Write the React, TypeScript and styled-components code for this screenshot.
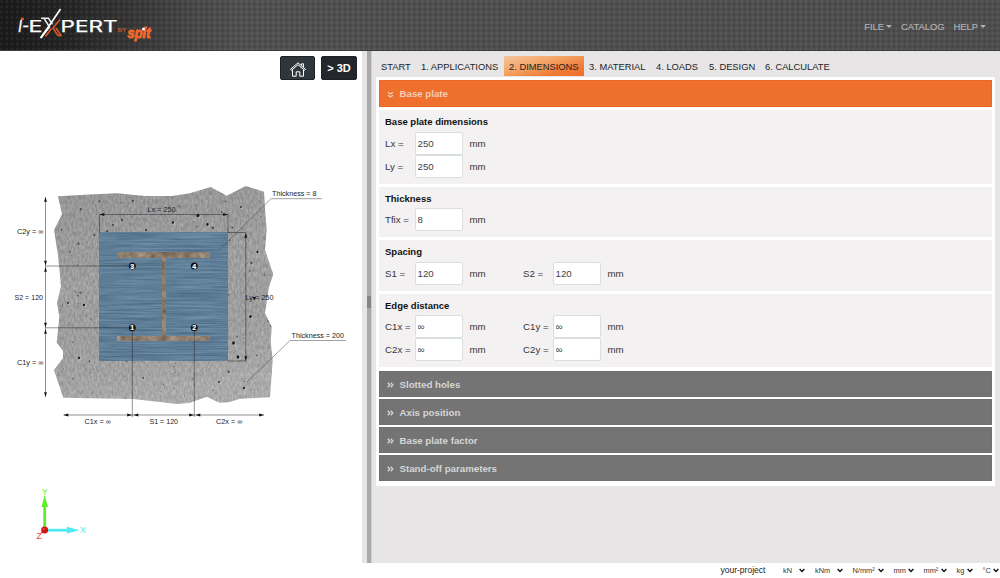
import React from "react";
import styled, { createGlobalStyle, css } from "styled-components";

const Global = createGlobalStyle`
  *, *::before, *::after { box-sizing: border-box; }
  body { margin: 0; background: #fff; overflow: hidden; }
  body, input, button { font-family: "Liberation Sans", Arial, sans-serif; }
`;

const Page = styled.div`
  display: flex;
  flex-direction: column;
  width: 1000px;
  height: 578px;
  color: #33363a;
  font-size: 9.7px;
`;

const Header = styled.header`
  display: flex;
  justify-content: space-between;
  flex: 0 0 51px;
  border-bottom: 1px solid #3c3a3b;
  background:
    radial-gradient(circle at 1.5px 1.5px, rgba(255, 255, 255, 0.08) 0.6px, transparent 1.6px) 0 0 / 5.33px 5.33px,
    radial-gradient(circle at 1.5px 1.5px, rgba(0, 0, 0, 0.14) 0.6px, transparent 1.8px) 2.6px 2.6px / 5.33px 5.33px,
    linear-gradient(90deg, #1a1a1a 0, #252525 70px, #393939 140px, #494949 200px, #505050 240px, #4e4e4e 100%);
`;

const Menu = styled.nav`
  display: flex;
  gap: 9px;
  padding: 20px 14px 0 0;
`;

const MenuItem = styled.a`
  display: flex;
  align-items: center;
  gap: 2px;
  height: 12px;
  color: #b0b0b0;
  font-size: 9.4px;
  -webkit-text-stroke: 0.2px #b0b0b0;
`;

const Caret = styled.span`
  border: 3px solid transparent;
  border-top-color: #b4b4b4;
  border-bottom: 0;
`;

const Main = styled.main`
  display: flex;
  flex: 0 0 512px;
`;

const Viewer = styled.section`
  display: flex;
  flex-direction: column;
  flex: 0 0 362px;
  background: #fff;
`;

const ViewerTools = styled.div`
  display: flex;
  justify-content: flex-end;
  gap: 6px;
  height: 30px;
  padding: 5px 5px 0 0;
`;

const ToolButton = styled.button<{ $tint?: boolean }>`
  display: flex;
  align-items: center;
  justify-content: center;
  width: ${(p) => (p.$tint ? 35 : 36)}px;
  height: 24px;
  padding: 0;
  border: 1px solid #1c2227;
  border-radius: 2px;
  background: ${(p) => (p.$tint ? "#30373c" : "#23272b")};
  color: #fff;
  font-size: 11px;
  font-weight: bold;

  svg { margin-top: 2px; }
`;

const Splitter = styled.div`
  display: flex;
  align-items: center;
  flex: 0 0 10px;
  border-left: 5px solid #e6e4e5;
  border-right: 1px solid #d0cecf;
  background: #aaa9aa;
`;

const Grip = styled.span`
  width: 4px;
  height: 12px;
  margin-top: -11px;
  background: #858585;
`;

const Side = styled.section`
  flex: 1;
  padding: 5px 5px 0 4px;
  background: #e7e5e6;
`;

const Tabs = styled.nav`
  display: flex;
  height: 21px;
`;

const Tab = styled.a<{ $active?: boolean; $w: number }>`
  flex: 0 0 ${(p) => p.$w}px;
  height: 20px;
  padding-left: 5px;
  line-height: 22px;
  font-size: 9.35px;
  white-space: nowrap;
  color: #222427;
  ${(p) =>
    p.$active &&
    css`
      background: linear-gradient(165deg, #f5c59d 0%, #f3a566 40%, #f07a34 75%, #ee6f2d 100%);
    `}
`;

const Panel = styled.div`
  display: flex;
  flex-direction: column;
  height: 409px;
  padding: 3px;
  background: #fff;
`;

const Bar = styled.div<{ $open?: boolean }>`
  display: flex;
  align-items: center;
  height: ${(p) => (p.$open ? 27 : 26)}px;
  padding-left: 6.5px;
  margin-bottom: ${(p) => (p.$open ? 3 : 2)}px;
  border: 1px solid ${(p) => (p.$open ? "#ea6823" : "#707070")};
  background: ${(p) => (p.$open ? "#ef702d" : "#747474")};
  color: ${(p) => (p.$open ? "#f3cdb8" : "#d6d6d6")};
  font-weight: bold;

  svg { margin: 2px 6px 0 0; }
`;

const Group = styled.div<{ $h: number; $last?: boolean }>`
  height: ${(p) => p.$h}px;
  margin-bottom: ${(p) => (p.$last ? 4 : 3)}px;
  padding: 6px 6px 0;
  background: #f3f1f2;
`;

const GroupTitle = styled.h3`
  height: 12px;
  margin: 0 0 4px;
  line-height: 12px;
  font-size: 9.5px;
  color: #111;
`;

const FieldRow = styled.div`
  display: flex;
  height: 22.7px;
`;

const Field = styled.label`
  display: flex;
  align-items: center;
  width: 138px;
`;

const FieldName = styled.span`
  width: 29.5px;
  white-space: nowrap;
`;

const FieldInput = styled.input`
  width: 48px;
  height: 23px;
  padding: 0 2px;
  margin-right: 7px;
  border: 1px solid #d9dee1;
  border-radius: 2px;
  background: #fff;
  color: #3d4247;
  font-size: 9.7px;
`;

const Footer = styled.footer`
  display: flex;
  flex: 0 0 15px;
  gap: 10px;
  padding: 0 2px 0 720.5px;
  background: #fff;
  line-height: 15px;
`;

const Project = styled.span`
  flex: 0 0 52.5px;
  font-size: 8.5px;
  color: #222;
`;

const Unit = styled.span<{ $w: number }>`
  display: flex;
  align-items: center;
  justify-content: space-between;
  flex: 0 0 ${(p) => p.$w}px;
  font-size: 7.4px;
  color: #333;
`;

const Logo = () => (
  <svg width="160" height="50" viewBox="0 0 160 50" fontFamily="'Liberation Sans', Arial, sans-serif">
    <g fill="#fff" fontFamily="Inter, sans-serif" fontSize="16" fontWeight="400" stroke="#fff" strokeWidth=".25">
      <text x="18" y="32" textLength="11" lengthAdjust="spacingAndGlyphs" fontStyle="italic">I-</text>
      <text x="28.500" y="32" textLength="14" lengthAdjust="spacingAndGlyphs">E</text>
      <text x="60.500" y="32" textLength="57" lengthAdjust="spacingAndGlyphs">PERT</text>
    </g>
    <rect x="20.800" y="17.800" width="3" height="2.200" fill="#ee6026" />
    <g fill="none" strokeWidth="1.500">
      <path d="M60 19.500 53 28l5 7.500h3l-5-7.500M51.500 28.500l-6 8" stroke="#e25a26" />
      <path d="M41 18.300h7.500l4 6M41 18.300h3l5.500 8.700-8.500 11" stroke="#eee" />
      <path d="M60.500 9 49 26 40.500 38" stroke="#fff" strokeWidth="1.700" />
    </g>
    <text x="117.500" y="32.200" fontSize="5.600" textLength="9" lengthAdjust="spacingAndGlyphs" fill="#c4552c" stroke="#c4552c" strokeWidth=".2">BY</text>
    <text x="127.500" y="38" fontSize="15.500" fontWeight="bold" fontStyle="italic" textLength="23" lengthAdjust="spacingAndGlyphs" fill="#f36a2b" stroke="#f36a2b" strokeWidth=".9">spit</text>
    <circle cx="143.500" cy="29" r="1.500" fill="#fff" />
  </svg>
);

const HomeIcon = () => (
  <svg width="18" height="16" viewBox="0 0 18 16" fill="none" stroke="#fff" strokeWidth="1">
    <path d="M1.500 8.300 9 1.800l7.500 6.500-.9 1L9 3.700l-6.600 5.600zM3.500 9v6.200h3.700v-4.400h3.600v4.400h3.700V9M12.500 4.500V2.800h2v3.500" />
  </svg>
);

const BarIcon = ({ open }: { open?: boolean }) => (
  <svg width="7" height="8" viewBox="0 0 7 8" fill="none" stroke="currentColor" strokeWidth="1.3">
    {open ? <path d="m1 1.200 2.500 1.800L6 1.200M1 4.200l2.500 1.800 2.500-1.800" /> : <path d="m.8 1.800 2 2.200-2 2.200M3.800 1.800l2 2.200-2 2.200" />}
  </svg>
);

const Chevron = () => (
  <svg width="6" height="5" viewBox="0 0 6 5" fill="none" stroke="#111" strokeWidth="1.4">
    <path d="M.6 1 3 3.500 5.400 1" />
  </svg>
);

const concrete =
  "58,196.300 90,194.500 117,193.300 145,196 172,196 190,193.300 210.700,187 226.700,195.700 245.700,186 264,191.700 265.300,213 266.700,230 265,250 273.300,274.300 269,287 265,313 271.700,327 270.700,342 272.700,360 270,397.300 240,398.700 230,402 219.300,402.700 206.700,396.700 190,402.700 177,404 160,402 133,399 63.300,397.700 54,370 63,358 63,350.700 56.700,342.700 59.300,317 57,303 61,286 58,255 54,230 62,214.300";

/* Deterministic scatter of the air pockets in the concrete. */
const pits = Array.from({ length: 190 }, (_, i) => {
  const a = Math.abs(Math.sin(i * 12.9898 + 4.1) * 43758.5453) % 1;
  const b = Math.abs(Math.sin(i * 78.233 + 1.7) * 24634.6345) % 1;
  const c = Math.abs(Math.sin(i * 39.425 + 2.3) * 9182.731) % 1;
  return { x: 54 + a * 218, y: 190 + b * 212, r: 0.4 + c * c * c * 0.7 };
});

const bigPits = [
  [198, 215.5, 1.8], [173, 222.5, 1.3], [207.5, 224.5, 1.4], [133, 201, 1], [241, 207, 1], [250.5, 316.5, 1.6],
  [233.5, 343, 1.7], [238, 357, 1.7], [257.5, 252, 1.2], [84, 305, 1.3], [68, 303, 1], [79, 358, 1.2], [219, 382, 1], [244, 388, 1.2],
];

type Arrow = [number, number, "u" | "d" | "l" | "r"];
const turn = { u: 0, r: 90, d: 180, l: 270 };
const arrows: Arrow[] = [
  [45.5, 197, "u"], [45.5, 265.5, "d"], [45.5, 267, "u"], [45.5, 327.5, "d"], [45.5, 329, "u"], [45.5, 397, "d"],
  [63.5, 415, "l"], [132, 415, "r"], [133.5, 415, "l"], [194, 415, "r"], [195.5, 415, "l"], [264, 415, "r"],
  [99.5, 214.5, "l"], [228, 214.5, "r"], [245.8, 233, "u"], [245.8, 361, "d"],
];

const labels: [string, number, number, number][] = [
  ["Lx = 250", 147.5, 212, 28], ["Thickness = 8", 272, 196, 44.5], ["Ly = 250", 245.5, 300, 28], ["Thickness = 200", 291.5, 338, 52.5],
  ["C2y = ∞", 17, 233.5, 26.5], ["S2 = 120", 14.5, 300, 28.5], ["C1y = ∞", 17, 365, 26.5],
  ["C1x = ∞", 84.5, 423.5, 26.5], ["S1 = 120", 149.5, 423.5, 28.5], ["C2x = ∞", 216, 423.5, 26.5],
];

const anchors: [string, number, number][] = [["3", 132.3, 266], ["4", 194.3, 266], ["1", 132.3, 327.8], ["2", 194.3, 327.8]];

const Drawing = () => (
  <svg width="362" height="482" viewBox="0 81 362 482" fontFamily="'Liberation Sans', Arial, sans-serif">
    <defs>
      <clipPath id="slab"><polygon points={concrete} /></clipPath>
      <linearGradient id="shade" x1="0" y1="0" x2="0.2" y2="1">
        <stop offset="0" stopColor="#000" stopOpacity=".08" />
        <stop offset=".5" stopColor="#000" stopOpacity=".01" />
        <stop offset="1" stopColor="#fff" stopOpacity=".1" />
      </linearGradient>
      <filter id="grain" x="0" y="0" width="100%" height="100%" colorInterpolationFilters="sRGB">
        <feTurbulence type="fractalNoise" baseFrequency=".5 .22" numOctaves="4" seed="7" />
        <feColorMatrix values=".24 0 0 0 .51  .24 0 0 0 .51  .24 0 0 0 .51  0 0 0 0 1" />
      </filter>
      <filter id="brushed" x="0" y="0" width="100%" height="100%" colorInterpolationFilters="sRGB">
        <feTurbulence type="fractalNoise" baseFrequency=".018 .6" numOctaves="4" seed="3" />
        <feColorMatrix values=".22 0 0 0 .26  .22 0 0 0 .38  .22 0 0 0 .48  0 0 0 0 1" />
      </filter>
      <filter id="rust" x="0" y="0" width="100%" height="100%" colorInterpolationFilters="sRGB">
        <feTurbulence type="fractalNoise" baseFrequency=".12" numOctaves="3" seed="5" />
        <feColorMatrix values=".4 0 0 0 .36  .4 0 0 0 .29  .4 0 0 0 .22  0 0 0 0 1" />
      </filter>
    </defs>

    <g clipPath="url(#slab)">
      <rect x="50" y="180" width="230" height="230" filter="url(#grain)" />
      <rect x="50" y="180" width="230" height="230" fill="url(#shade)" />
      {pits.map((p, i) => (
        <ellipse key={i} cx={p.x} cy={p.y} rx={p.r} ry={p.r * 1.2} fill="#2b2b2b" opacity=".75" />
      ))}
      {bigPits.map(([x, y, r], i) => (
        <g key={i}>
          <ellipse cx={x + 1} cy={y + 1} rx={r} ry={r} fill="#ccc" opacity=".6" />
          <ellipse cx={x} cy={y} rx={r * 0.8} ry={r} fill="#161616" />
        </g>
      ))}
    </g>
    <rect x="99.500" y="232.500" width="128.500" height="128.500" filter="url(#brushed)" />
    <g>
      <rect x="117.500" y="252.700" width="92.500" height="5" filter="url(#rust)" />
      <rect x="162" y="257.500" width="3.500" height="79" filter="url(#rust)" />
      <rect x="117.500" y="336" width="92.500" height="5" filter="url(#rust)" />
    </g>

    <g stroke="#222" strokeWidth=".5" fill="none">
      <path d="M45.500 197V397M45.500 266H132M45.500 327.800H132M63.500 415H264M132.300 328V417M194.300 328V417" />
      <path d="M99.500 233V214.500H228V232.500H245.800V361H228" />
    </g>
    <g stroke="#444" strokeWidth=".5" fill="none">
      <path d="m219 250 52-51.300h51M247 382l43-41.500h56" />
    </g>
    {arrows.map(([x, y, d], i) => (
      <path key={i} d="M0 0 1.400 4.800h-2.800z" transform={`translate(${x} ${y}) rotate(${turn[d]})`} fill="#111" />
    ))}
    <path d="m252.500 297 3.500 0-1.600 3.500z" fill="#111" />
    {anchors.map(([n, x, y]) => (
      <g key={n}>
        <circle cx={x} cy={y} r="3.500" fill="#111" />
        <text x={x} y={y + 2.5} fontSize="7" fontWeight="bold" fill="#fff" stroke="#fff" strokeWidth=".2" textAnchor="middle">{n}</text>
      </g>
    ))}
    <g fontSize="7.200" fill="#222">
      {labels.map(([t, x, y, w]) => (
        <text key={t} x={x} y={y} textLength={w} lengthAdjust="spacingAndGlyphs">{t}</text>
      ))}
    </g>

    <rect x="43.300" y="505" width="2.800" height="25" fill="#5df02a" />
    <path d="m44.700 495 3.300 12h-6.600z" fill="#5df02a" />
    <rect x="45" y="528.800" width="24" height="2.800" fill="#4ee9f2" />
    <path d="m79.500 530.200-12.500-3.400v6.800z" fill="#4ee9f2" />
    <path d="m40 534 4-4" stroke="#f04238" strokeWidth=".8" />
    <circle cx="44.600" cy="530" r="3.500" fill="#d4140f" />
    <circle cx="43.700" cy="529" r="1.100" fill="#f04a3c" />
    <g fontSize="8.800">
      <text x="41.700" y="495" fill="#5df02a">Y</text>
      <text x="80" y="533.300" fill="#4ee9f2">X</text>
      <text x="36.500" y="538.500" fill="#f04238">Z</text>
    </g>
  </svg>
);

const Value = ({ name, value }: { name: string; value: string }) => (
  <Field>
    <FieldName>{name} =</FieldName>
    <FieldInput defaultValue={value} />
    <span>mm</span>
  </Field>
);

const groups: { title: string; h: number; rows: [string, string][][] }[] = [
  { title: "Base plate dimensions", h: 73.5, rows: [[["Lx", "250"]], [["Ly", "250"]]] },
  { title: "Thickness", h: 50.5, rows: [[["Tfix", "8"]]] },
  { title: "Spacing", h: 50.5, rows: [[["S1", "120"], ["S2", "120"]]] },
  { title: "Edge distance", h: 73.5, rows: [[["C1x", "∞"], ["C1y", "∞"]], [["C2x", "∞"], ["C2y", "∞"]]] },
];

const tabs: [string, number][] = [
  ["START", 40], ["1. APPLICATIONS", 88], ["2. DIMENSIONS", 80], ["3. MATERIAL", 67],
  ["4. LOADS", 53], ["5. DESIGN", 56], ["6. CALCULATE", 75],
];

const units: [string, number][] = [["kN", 22], ["kNm", 27.5], ["N/mm²", 31], ["mm", 20], ["mm²", 23], ["kg", 16], ["°C", 16]];

export default function App() {
  return (
    <Page>
      <Global />
      <Header>
        <Logo />
        <Menu>
          <MenuItem>FILE<Caret /></MenuItem>
          <MenuItem>CATALOG</MenuItem>
          <MenuItem>HELP<Caret /></MenuItem>
        </Menu>
      </Header>
      <Main>
        <Viewer>
          <ViewerTools>
            <ToolButton $tint aria-label="Home"><HomeIcon /></ToolButton>
            <ToolButton>&gt; 3D</ToolButton>
          </ViewerTools>
          <Drawing />
        </Viewer>
        <Splitter><Grip /></Splitter>
        <Side>
          <Tabs>
            {tabs.map(([t, w]) => (
              <Tab key={t} $w={w} $active={t.startsWith("2")}>{t}</Tab>
            ))}
          </Tabs>
          <Panel>
            <Bar $open><BarIcon open />Base plate</Bar>
            {groups.map((g, i) => (
              <Group key={g.title} $h={g.h} $last={i === groups.length - 1}>
                <GroupTitle>{g.title}</GroupTitle>
                {g.rows.map((r) => (
                  <FieldRow key={r[0][0]}>
                    {r.map(([n, v]) => <Value key={n} name={n} value={v} />)}
                  </FieldRow>
                ))}
              </Group>
            ))}
            {["Slotted holes", "Axis position", "Base plate factor", "Stand-off parameters"].map((t) => (
              <Bar key={t}><BarIcon />{t}</Bar>
            ))}
          </Panel>
        </Side>
      </Main>
      <Footer>
        <Project>your-project</Project>
        {units.map(([u, w]) => (
          <Unit key={u} $w={w}>{u}<Chevron /></Unit>
        ))}
      </Footer>
    </Page>
  );
}
